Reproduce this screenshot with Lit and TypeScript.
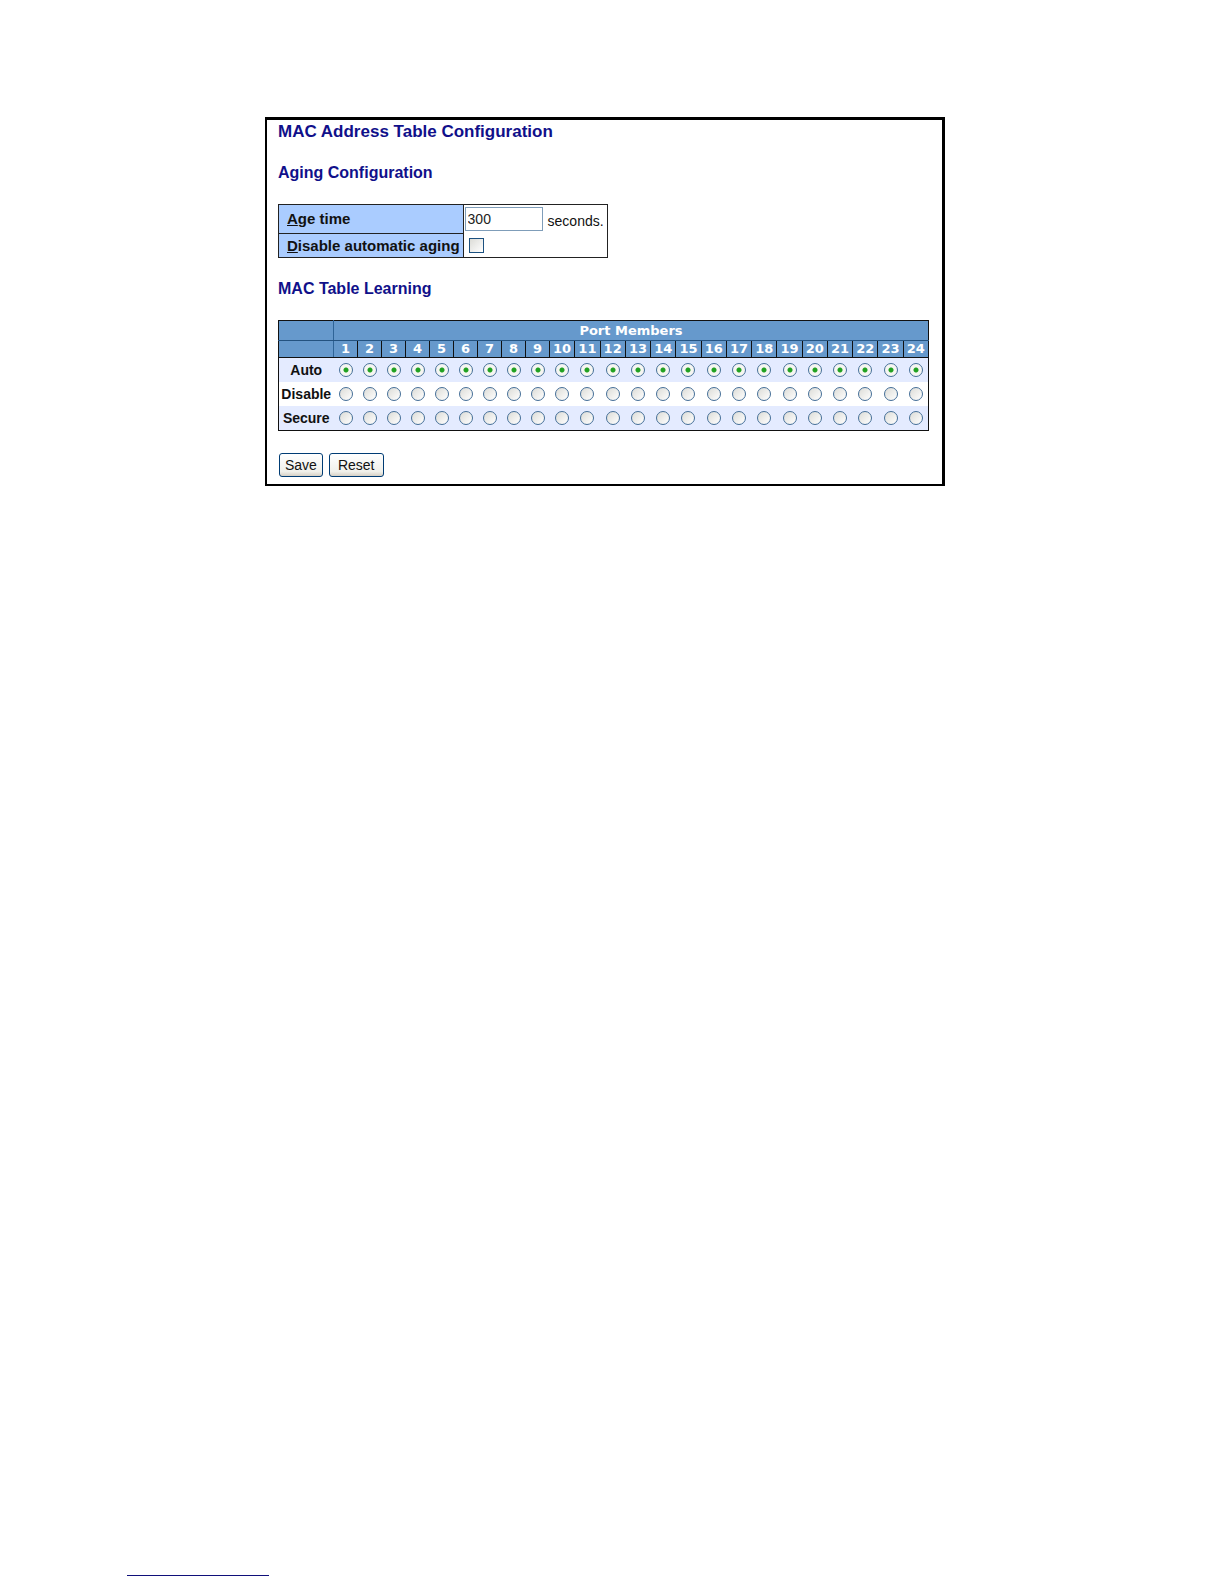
import { LitElement, html, css } from 'lit';
import { customElement, state } from 'lit/decorators.js';

const PORTS = Array.from({ length: 24 }, (_, i) => i + 1);
const MODES = ['Auto', 'Disable', 'Secure'];

@customElement('mac-aging-form')
class MacAgingForm extends LitElement {
    static styles = css`
    :host {
        display: block;
    }
    table {
        border-collapse: collapse;
        border: 1px solid #222;
    }
    th {
        padding: 0 3px 0 8px;
        border: 1px solid #222;
        background: #aaccff;
        text-align: left;
        font-size: 15px;
        line-height: 20px;
    }
    td {
        padding: 0 3px 0 1px;
        font-size: 14px;
    }
    .time {
        height: 29px;
    }
    .auto {
        height: 24px;
    }
    .field {
        display: flex;
        align-items: center;
        gap: 5px;
    }
    .unit {
        padding-top: 4px;
    }
    .key {
        text-decoration: underline;
    }
    .age {
        box-sizing: border-box;
        width: 78px;
        height: 24px;
        margin: 0;
        padding: 0 2px;
        border: 1px solid #7f9db9;
        background: #fff;
        color: #222;
        font: 14px "Liberation Sans", sans-serif;
    }
    .check {
        appearance: none;
        display: block;
        box-sizing: border-box;
        width: 15px;
        height: 15px;
        margin: 0 4px;
        border: 1px solid #1c5180;
        background: linear-gradient(135deg, #dcdcd7, #fff);
    }
    .check:checked {
        background: #21a121;
    }
    `;

    render() {
        return html`
        <table>
            <tr class="time">
                <th><label for="age"><span class="key">A</span>ge time</label></th>
                <td>
                    <div class="field">
                        <input class="age" id="age" type="text" value="300">
                        <span class="unit">seconds.</span>
                    </div>
                </td>
            </tr>
            <tr class="auto">
                <th><label for="disable"><span class="key">D</span>isable automatic aging</label></th>
                <td><input class="check" id="disable" type="checkbox"></td>
            </tr>
        </table>
        `;
    }
}

@customElement('mac-learning-table')
class MacLearningTable extends LitElement {
    @state() modes: string[] = PORTS.map(() => 'Auto');

    static styles = css`
    :host {
        display: block;
    }
    table {
        width: 100%;
        table-layout: fixed;
        border-collapse: collapse;
        border: 1px solid #111;
    }
    .name {
        width: 55px;
    }
    .narrow {
        width: 24px;
    }
    th, td {
        padding: 0;
        text-align: center;
    }
    thead th {
        background: #6699cc;
        color: #fff;
        font: bold 13px/16px "DejaVu Sans", sans-serif;
        border: 1px solid #111;
    }
    .group th {
        height: 19px;
        border-bottom-color: #24527f;
    }
    thead .corner {
        border-right-color: #2f6497;
    }
    .ports th {
        height: 16px;
    }
    tbody th {
        font-size: 14px;
        line-height: 16px;
    }
    tbody tr {
        height: 24px;
    }
    tbody tr:last-child {
        height: 25px;
    }
    tbody tr:nth-child(odd) {
        background: #e4ebff;
    }
    .radio {
        appearance: none;
        display: block;
        box-sizing: border-box;
        width: 14px;
        height: 14px;
        margin: 0 auto;
        border: 1px solid #456f98;
        border-radius: 50%;
        background: linear-gradient(135deg, #dcdcd7, #fff);
    }
    .radio:checked {
        background: radial-gradient(circle, #21a121 2px, #f6f6f2 3px);
    }
    `;

    pick(port: number, mode: string) {
        this.modes = this.modes.map((m, i) => (i === port - 1 ? mode : m));
    }

    render() {
        return html`
        <table>
            <colgroup>
                <col class="name">
                <col class="narrow" span="9">
                <col span="15">
            </colgroup>
            <thead>
                <tr class="group">
                    <th class="corner"></th>
                    <th colspan="24">Port Members</th>
                </tr>
                <tr class="ports">
                    <th class="corner"></th>
                    ${PORTS.map(port => html`<th>${port}</th>`)}
                </tr>
            </thead>
            <tbody>
                ${MODES.map(mode => html`
                <tr>
                    <th>${mode}</th>
                    ${PORTS.map(port => html`
                    <td>
                        <input class="radio" type="radio" name="port${port}"
                            aria-label="${mode} port ${port}"
                            .checked=${this.modes[port - 1] === mode}
                            @change=${() => this.pick(port, mode)}>
                    </td>`)}
                </tr>`)}
            </tbody>
        </table>
        `;
    }
}

@customElement('app-root')
class AppRoot extends LitElement {
    static styles = css`
    :host {
        display: flex;
        flex-direction: column;
        box-sizing: border-box;
        min-height: 100vh;
        padding: 117px 279px 8px 265px;
        background: #fff;
        color: #111;
        font-family: "Liberation Sans", Arial, sans-serif;
    }
    .panel {
        padding: 2px 13px 7px 11px;
        border: 3px solid #000;
        border-left-width: 2px;
        border-bottom-width: 2px;
    }
    h1, h2 {
        margin: 0;
        color: #10108a;
        font-weight: bold;
        line-height: 20px;
    }
    h1 {
        font-size: 17px;
    }
    h2 {
        margin: 20px 0;
        font-size: 16px;
        line-height: 22px;
    }
    .buttons {
        display: flex;
        gap: 6px;
        margin: 22px 1px 0;
    }
    button {
        height: 24px;
        padding: 0 5px 1px;
        border: 1px solid #003c74;
        border-radius: 3px;
        background: linear-gradient(#fff, #f0f0ea 80%, #d6d0c5);
        color: #111;
        font: 14px "Liberation Sans", Arial, sans-serif;
    }
    .reset {
        padding: 0 8px 1px;
    }
    footer {
        width: 142px;
        margin-top: auto;
        margin-left: -138px;
        border-top: 1px solid #10107a;
    }
    `;

    render() {
        return html`
        <main class="panel">
            <h1>MAC Address Table Configuration</h1>
            <h2>Aging Configuration</h2>
            <mac-aging-form></mac-aging-form>
            <h2>MAC Table Learning</h2>
            <mac-learning-table></mac-learning-table>
            <div class="buttons">
                <button type="button">Save</button>
                <button class="reset" type="button">Reset</button>
            </div>
        </main>
        <footer></footer>
        `;
    }
}
